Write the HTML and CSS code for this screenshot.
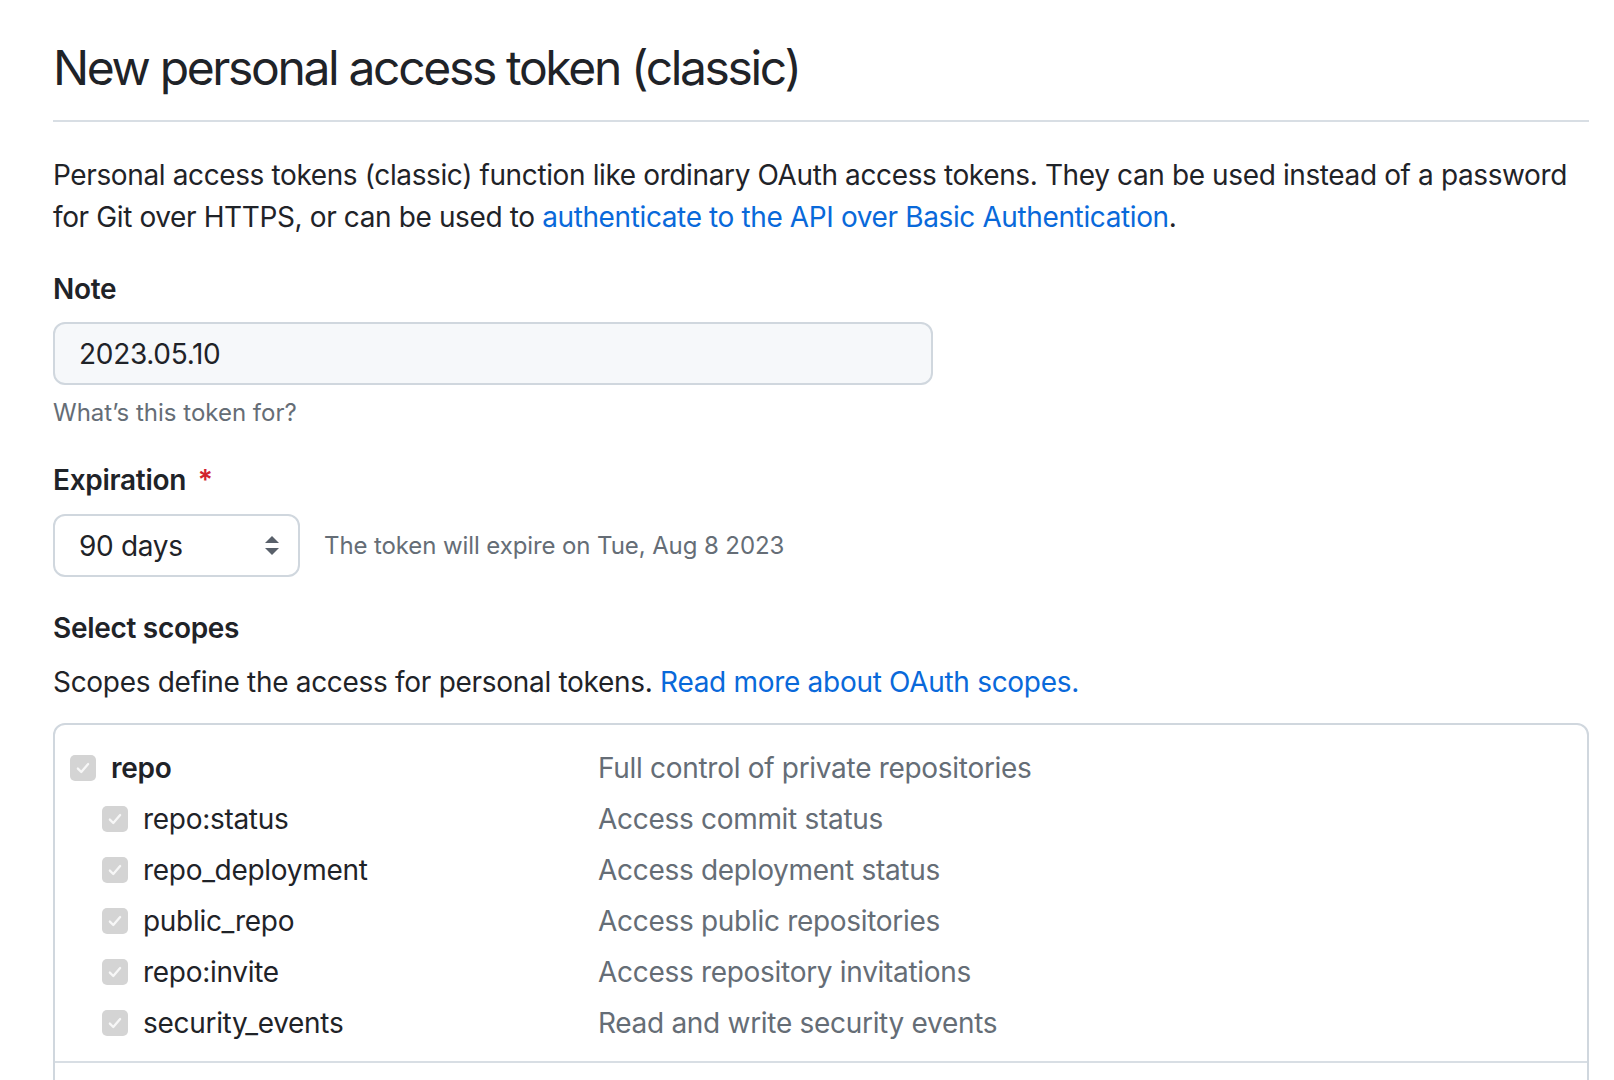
FILE: index.html
```html
<!DOCTYPE html>
<html lang="en">
<head>
    <meta charset="UTF-8">
    <meta name="viewport" content="width=device-width, initial-scale=1.0">
    <title>New personal access token (classic)</title>
    <link rel="stylesheet" href="styles.css">
</head>
<body>

<div class="page">
    <h1 class="page-title">New personal access token (classic)</h1>

    <p class="intro">Personal access tokens (classic) function like ordinary OAuth access tokens. They can be used instead of a password for Git over HTTPS, or can be used to <a href="#">authenticate to the API over Basic Authentication</a>.</p>

    <form id="tokenForm">
        <div class="form-group">
            <label class="field-label" for="note">Note</label>
            <input class="text-input" type="text" id="note" name="note" value="2023.05.10">
            <p class="note">What’s this token for?</p>
        </div>

        <div class="form-group expiry">
            <label class="field-label" for="expiration">Expiration <span class="required">*</span></label>
            <div class="expiry-row">
                <div class="select-box">
                    <span>90 days</span>
                    <svg class="select-arrows" width="16" height="20" viewBox="0 0 16 20">
                        <path d="M8 0 L15 7 L1 7 Z" fill="#59606a"/>
                        <path d="M1 12 L15 12 L8 19 Z" fill="#59606a"/>
                    </svg>
                </div>
                <span class="expiry-text">The token will expire on Tue, Aug 8 2023</span>
            </div>
        </div>

        <div class="form-group scopes">
            <div class="field-label">Select scopes</div>
            <p class="scopes-intro">Scopes define the access for personal tokens. <a href="#">Read more about OAuth scopes.</a></p>

            <div class="scope-box">
                <div class="scope-group">
                    <div class="scope-row">
                        <div class="scope-name parent"><span class="check"><svg width="16" height="16" viewBox="0 0 14 14"><path d="M2.5 7.5 L5.5 10.5 L11.5 3.5" fill="none" stroke="#f7f7f7" stroke-width="2" stroke-linecap="round" stroke-linejoin="round"/></svg></span>repo</div>
                        <div class="scope-desc">Full control of private repositories</div>
                    </div>
                    <div class="scope-row sub">
                        <div class="scope-name"><span class="check"><svg width="16" height="16" viewBox="0 0 14 14"><path d="M2.5 7.5 L5.5 10.5 L11.5 3.5" fill="none" stroke="#f7f7f7" stroke-width="2" stroke-linecap="round" stroke-linejoin="round"/></svg></span>repo:status</div>
                        <div class="scope-desc">Access commit status</div>
                    </div>
                    <div class="scope-row sub">
                        <div class="scope-name"><span class="check"><svg width="16" height="16" viewBox="0 0 14 14"><path d="M2.5 7.5 L5.5 10.5 L11.5 3.5" fill="none" stroke="#f7f7f7" stroke-width="2" stroke-linecap="round" stroke-linejoin="round"/></svg></span>repo_deployment</div>
                        <div class="scope-desc">Access deployment status</div>
                    </div>
                    <div class="scope-row sub">
                        <div class="scope-name"><span class="check"><svg width="16" height="16" viewBox="0 0 14 14"><path d="M2.5 7.5 L5.5 10.5 L11.5 3.5" fill="none" stroke="#f7f7f7" stroke-width="2" stroke-linecap="round" stroke-linejoin="round"/></svg></span>public_repo</div>
                        <div class="scope-desc">Access public repositories</div>
                    </div>
                    <div class="scope-row sub">
                        <div class="scope-name"><span class="check"><svg width="16" height="16" viewBox="0 0 14 14"><path d="M2.5 7.5 L5.5 10.5 L11.5 3.5" fill="none" stroke="#f7f7f7" stroke-width="2" stroke-linecap="round" stroke-linejoin="round"/></svg></span>repo:invite</div>
                        <div class="scope-desc">Access repository invitations</div>
                    </div>
                    <div class="scope-row sub">
                        <div class="scope-name"><span class="check"><svg width="16" height="16" viewBox="0 0 14 14"><path d="M2.5 7.5 L5.5 10.5 L11.5 3.5" fill="none" stroke="#f7f7f7" stroke-width="2" stroke-linecap="round" stroke-linejoin="round"/></svg></span>security_events</div>
                        <div class="scope-desc">Read and write security events</div>
                    </div>
                </div>
                <div class="scope-group">
                    <div class="scope-row">
                        <div class="scope-name parent"><span class="check"><svg width="16" height="16" viewBox="0 0 14 14"><path d="M2.5 7.5 L5.5 10.5 L11.5 3.5" fill="none" stroke="#f7f7f7" stroke-width="2" stroke-linecap="round" stroke-linejoin="round"/></svg></span>workflow</div>
                        <div class="scope-desc">Update GitHub Action workflows</div>
                    </div>
                </div>
            </div>
        </div>
    </form>
</div>

</body>
</html>
```

FILE: styles.css
```css
/* token settings page, drawn at 2x */

body {
    font-family: Inter, "Noto Sans", sans-serif;
    letter-spacing: -0.3px;
    color: #1f2328;
    background-color: #fff;
    margin: 0;
    padding: 0;
    overflow: hidden;
}
a {
    color: #0969da;
    text-decoration: none;
}
.page {
    width: 1536px;
    margin-left: 53px;
}
.page-title {
    font-size: 48px;
    font-weight: 400;
    line-height: 60px;
    letter-spacing: -2.35px;
    margin: 38px 0 0;
    padding-bottom: 22px;
    border-bottom: 2px solid #d8dee4;
}
.intro {
    font-size: 28px;
    line-height: 42px;
    letter-spacing: -0.38px;
    margin: 32px 0 0;
}
.form-group {
    margin-top: 30px;
}
.form-group.expiry {
    margin-top: 28px;
}
.field-label {
    display: block;
    font-size: 28px;
    font-weight: 600;
    line-height: 42px;
}
.required {
    color: #d1242f;
    margin-left: 5px;
}
.text-input {
    display: block;
    width: 880px;
    height: 63px;
    margin-top: 12px;
    padding: 0 24px;
    box-sizing: border-box;
    font-family: inherit;
    font-size: 28px;
    letter-spacing: -0.3px;
    color: #1f2328;
    background-color: #f6f8fa;
    border: 2px solid #d0d7de;
    border-radius: 12px;
}
.note {
    font-size: 24px;
    line-height: 36px;
    letter-spacing: 0;
    color: #656d76;
    margin: 10px 0 0;
}
.expiry-row {
    display: flex;
    align-items: center;
    gap: 24px;
    margin-top: 13px;
}
.select-box {
    display: flex;
    align-items: center;
    justify-content: space-between;
    width: 247px;
    height: 63px;
    padding: 0 18px 0 24px;
    box-sizing: border-box;
    font-size: 28px;
    border: 2px solid #d0d7de;
    border-radius: 12px;
}
.expiry-text {
    font-size: 24px;
    letter-spacing: -0.1px;
    color: #656d76;
}
.scopes-intro {
    font-size: 28px;
    line-height: 42px;
    margin: 12px 0 0;
}
.scope-box {
    margin-top: 20px;
    border: 2px solid #d0d7de;
    border-radius: 12px;
}
.scope-group {
    padding: 17px 0 13px;
    border-top: 2px solid #d8dee4;
}
.scope-group:first-child {
    border-top: none;
}
.scope-row {
    display: flex;
    align-items: center;
    height: 51px;
    padding-left: 15px;
    font-size: 28px;
}
.scope-name {
    display: flex;
    align-items: center;
    gap: 15px;
    width: 528px;
    box-sizing: border-box;
}
.scope-name.parent {
    font-weight: 600;
}
.scope-row.sub .scope-name {
    padding-left: 32px;
}
.check {
    display: flex;
    align-items: center;
    justify-content: center;
    width: 26px;
    height: 26px;
    border-radius: 5px;
    background-color: #d4d4d4;
}
.scope-desc {
    color: #656d76;
}
```
